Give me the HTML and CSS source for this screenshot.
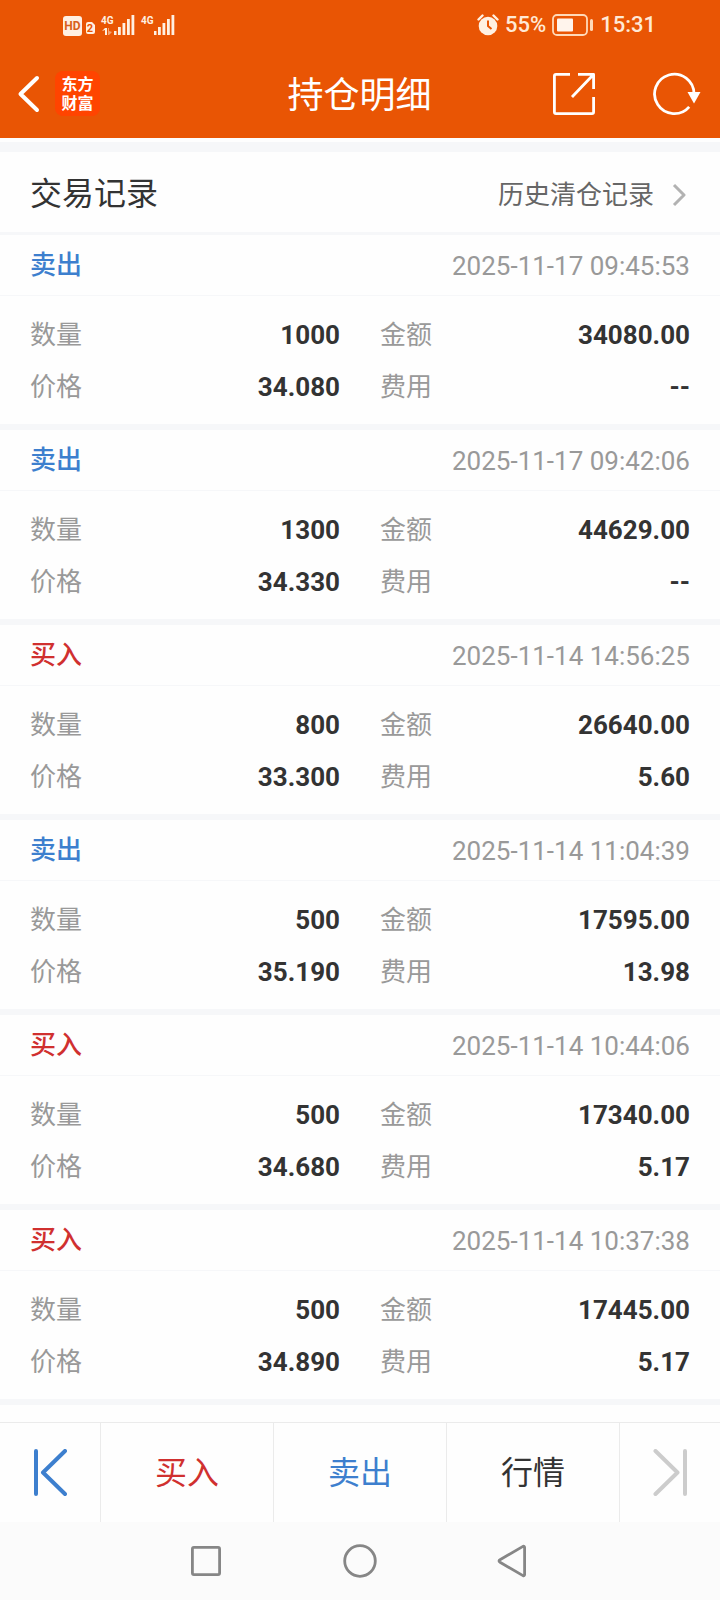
FILE: index.html
```html
<!DOCTYPE html>
<html lang="zh-CN">
<head>
<meta charset="utf-8">
<meta name="viewport" content="width=device-width, initial-scale=1">
<title>持仓明细</title>
<link rel="stylesheet" href="styles.css">
</head>
<body>
<div class="app">
  <header class="top">
    <div class="status">
      <svg class="status-icons" width="116" height="24" viewBox="0 0 116 24" fill="#fff0e2" aria-hidden="true">
        <rect x="0" y="3" width="19" height="20" rx="3"/>
        <text class="hd" x="9.500" y="17" text-anchor="middle">HD</text>
        <path d="M25 9h4l3 3v7q0 2-2 2h-5q-2 0-2-2v-8q0-2 2-2z"/>
        <text class="sim" x="27" y="19" text-anchor="middle">2</text>
        <text class="net" x="38" y="11">4G</text>
        <path d="M39 18l3-3h2v7h-2v-5z"/>
        <path d="M45 15h1v3l3 1-3 3h-1z" opacity=".5"/>
        <path d="M51 18h2.500v4h-2.500zM55 14h2.800v8h-2.800zM59.500 10h2.800v12h-2.800zM64 6h2.800v16h-2.800zM68.500 2h2.800v20h-2.800z"/>
        <text class="net" x="78" y="11">4G</text>
        <path d="M91 18h2.500v4h-2.500zM95 14h2.800v8h-2.800zM99.500 10h2.800v12h-2.800zM104 6h2.800v16h-2.800zM108.500 2h2.800v20h-2.800z"/>
      </svg>
      <div class="status-right">
        <svg width="22" height="22" viewBox="0 0 22 22" aria-hidden="true">
          <circle cx="11" cy="12" r="9.3" fill="#fff0e2"/>
          <path d="M1.500 5.500L5.500 1.500M20.500 5.500L16.500 1.500" stroke="#fff0e2" stroke-width="2.400" stroke-linecap="round"/>
          <path d="M11 6.500V12l3.500 3" fill="none" stroke="#e95504" stroke-width="2"/>
        </svg>
        <span class="battery-text">55%</span>
        <svg width="42" height="22" viewBox="0 0 42 22" aria-hidden="true">
          <rect x="1" y="1" width="34" height="20" rx="4" fill="none" stroke="#ffd9b8" stroke-width="1.800"/>
          <rect x="5" y="4.500" width="16" height="13" rx="1" fill="#fff4ec"/>
          <rect x="38" y="5" width="3" height="12" rx="1.500" fill="#ffd9b8"/>
        </svg>
        <span class="clock">15:31</span>
      </div>
    </div>
    <div class="title-bar">
      <div class="title-left">
        <button class="icon-btn" aria-label="返回">
          <svg width="24" height="40" viewBox="0 0 24 40"><path d="M20 4L3.500 20L20 36" fill="none" stroke="#fff" stroke-width="4" stroke-linecap="round" stroke-linejoin="round"/></svg>
        </button>
        <div class="logo"><span>东方</span><span>财富</span></div>
      </div>
      <h1 class="title">持仓明细</h1>
      <div class="title-right">
        <button class="icon-btn" aria-label="分享">
          <svg width="44" height="44" viewBox="0 0 44 44" fill="none" stroke="#fff" stroke-width="2.800" stroke-linejoin="round"><path d="M18 2.400H4Q2.400 2.400 2.400 4V40Q2.400 41.600 4 41.600H40Q41.600 41.600 41.600 40V25M26 2.400H41.600V17M41 3L20 25"/></svg>
        </button>
        <button class="icon-btn" aria-label="刷新">
          <svg width="50" height="44" viewBox="0 0 50 44"><path d="M37.200 34.800A19.700 19.700 0 1 1 42 22" fill="none" stroke="#fff" stroke-width="2.800"/><path d="M35.500 20H48.500L42 31.500Z" fill="#fff"/></svg>
        </button>
      </div>
    </div>
  </header>

  <main class="content">
    <div class="section-head">
      <h2 class="section-title">交易记录</h2>
      <a class="history" href="#">历史清仓记录
        <svg width="14" height="24" viewBox="0 0 14 24"><path d="M2 2L12 12L2 22" fill="none" stroke="#b2b2b2" stroke-width="3" stroke-linejoin="round"/></svg>
      </a>
    </div>

    <article class="record">
      <div class="record-head"><span class="side sell">卖出</span><time>2025-11-17 09:45:53</time></div>
      <dl class="record-body">
        <div class="cell"><dt>数量</dt><dd>1000</dd></div>
        <div class="cell"><dt>金额</dt><dd>34080.00</dd></div>
        <div class="cell"><dt>价格</dt><dd>34.080</dd></div>
        <div class="cell"><dt>费用</dt><dd>--</dd></div>
      </dl>
    </article>
    <article class="record">
      <div class="record-head"><span class="side sell">卖出</span><time>2025-11-17 09:42:06</time></div>
      <dl class="record-body">
        <div class="cell"><dt>数量</dt><dd>1300</dd></div>
        <div class="cell"><dt>金额</dt><dd>44629.00</dd></div>
        <div class="cell"><dt>价格</dt><dd>34.330</dd></div>
        <div class="cell"><dt>费用</dt><dd>--</dd></div>
      </dl>
    </article>
    <article class="record">
      <div class="record-head"><span class="side buy">买入</span><time>2025-11-14 14:56:25</time></div>
      <dl class="record-body">
        <div class="cell"><dt>数量</dt><dd>800</dd></div>
        <div class="cell"><dt>金额</dt><dd>26640.00</dd></div>
        <div class="cell"><dt>价格</dt><dd>33.300</dd></div>
        <div class="cell"><dt>费用</dt><dd>5.60</dd></div>
      </dl>
    </article>
    <article class="record">
      <div class="record-head"><span class="side sell">卖出</span><time>2025-11-14 11:04:39</time></div>
      <dl class="record-body">
        <div class="cell"><dt>数量</dt><dd>500</dd></div>
        <div class="cell"><dt>金额</dt><dd>17595.00</dd></div>
        <div class="cell"><dt>价格</dt><dd>35.190</dd></div>
        <div class="cell"><dt>费用</dt><dd>13.98</dd></div>
      </dl>
    </article>
    <article class="record">
      <div class="record-head"><span class="side buy">买入</span><time>2025-11-14 10:44:06</time></div>
      <dl class="record-body">
        <div class="cell"><dt>数量</dt><dd>500</dd></div>
        <div class="cell"><dt>金额</dt><dd>17340.00</dd></div>
        <div class="cell"><dt>价格</dt><dd>34.680</dd></div>
        <div class="cell"><dt>费用</dt><dd>5.17</dd></div>
      </dl>
    </article>
    <article class="record">
      <div class="record-head"><span class="side buy">买入</span><time>2025-11-14 10:37:38</time></div>
      <dl class="record-body">
        <div class="cell"><dt>数量</dt><dd>500</dd></div>
        <div class="cell"><dt>金额</dt><dd>17445.00</dd></div>
        <div class="cell"><dt>价格</dt><dd>34.890</dd></div>
        <div class="cell"><dt>费用</dt><dd>5.17</dd></div>
      </dl>
    </article>
  </main>

  <div class="actions">
    <button class="action" aria-label="上一个">
      <svg width="34" height="48" viewBox="0 0 34 48" fill="none" stroke="#3d7fce" stroke-width="4" stroke-linecap="round" stroke-linejoin="round"><path d="M3 2V45M32 2L10 23.500L32 45"/></svg>
    </button>
    <button class="action buy">买入</button>
    <button class="action sell">卖出</button>
    <button class="action">行情</button>
    <button class="action" aria-label="下一个" disabled>
      <svg width="34" height="48" viewBox="0 0 34 48" fill="none" stroke="#cccccc" stroke-width="4" stroke-linecap="round" stroke-linejoin="round"><path d="M32 2V45M2.500 2L24.500 23.500L2.500 45"/></svg>
    </button>
  </div>

  <nav class="system-nav">
    <button class="icon-btn" aria-label="最近任务">
      <svg width="34" height="34" viewBox="0 0 34 34" fill="none" stroke="#868686" stroke-width="2.800"><rect x="3.400" y="3.400" width="27.200" height="27.200" rx="1.500"/></svg>
    </button>
    <button class="icon-btn" aria-label="主屏幕">
      <svg width="34" height="34" viewBox="0 0 34 34" fill="none" stroke="#868686" stroke-width="2.800"><circle cx="17" cy="17" r="15.300"/></svg>
    </button>
    <button class="icon-btn" aria-label="后退">
      <svg width="34" height="34" viewBox="0 0 34 34" fill="none" stroke="#868686" stroke-width="2.800" stroke-linejoin="round"><path d="M3 15.800L26 2.400Q27.600 1.800 27.600 3.400V30.600Q27.600 32.200 26 31.600L3 18.200Q1 17 3 15.800Z"/></svg>
    </button>
  </nav>
</div>
</body>
</html>
```
FILE: styles.css
```css
* {
  box-sizing: border-box;
}

body {
  margin: 0;
  background: #fefefe;
  color: #333;
  font-family: Roboto, "Noto Sans CJK SC", sans-serif;
  font-size: 26px;
}

h1, h2, dl, dd {
  margin: 0;
  font-weight: 400;
}

button {
  margin: 0;
  padding: 0;
  border: 0;
  background: none;
  color: inherit;
  font: inherit;
}

svg {
  display: block;
}

.app {
  display: flex;
  flex-direction: column;
  min-height: 100vh;
}

.top {
  background: #e95504;
  color: #fff;
}

.status {
  display: flex;
  align-items: center;
  justify-content: space-between;
  height: 49px;
  padding: 0 64px 0 63px;
}

.hd, .sim, .net {
  font-family: Roboto, sans-serif;
  font-weight: 700;
}

.hd {
  font-size: 12px;
  fill: #d8601c;
}

.sim {
  font-size: 11px;
  fill: #e95504;
}

.net {
  font-size: 10px;
}

.status-right {
  display: flex;
  align-items: center;
  gap: 6px;
  color: #ffe9d6;
  font-size: 22px;
  font-weight: 500;
  line-height: 28px;
}

.title-bar {
  display: grid;
  grid-template-columns: 1fr auto 1fr;
  align-items: center;
  height: 89px;
  padding: 0 18px 0 17px;
}

.title-left, .title-right {
  display: flex;
  align-items: center;
}

.title-left {
  gap: 14px;
}

.title-right {
  justify-content: flex-end;
  gap: 56px;
}

.logo {
  display: flex;
  flex-direction: column;
  align-items: center;
  justify-content: center;
  width: 45px;
  height: 45px;
  border-radius: 8px;
  background: #ff4400;
  font-size: 16px;
  font-weight: 700;
  line-height: 19px;
}

.title {
  padding-top: 4px;
  font-size: 36px;
  line-height: 48px;
}

.content {
  flex: 1;
  padding-top: 4px;
}

.section-head {
  display: flex;
  align-items: center;
  justify-content: space-between;
  height: 93px;
  padding: 4px 34px 0 30px;
  border-top: 10px solid #f6f7f9;
  border-bottom: 3px solid #f6f7f9;
}

.section-title {
  font-size: 32px;
  line-height: 48px;
}

.history {
  display: flex;
  align-items: center;
  gap: 18px;
  padding-top: 2px;
  color: #666;
  line-height: 36px;
  text-decoration: none;
}

.record {
  border-bottom: 6px solid #f6f7f9;
}

.record-head {
  display: flex;
  align-items: center;
  justify-content: space-between;
  height: 61px;
  padding: 0 30px;
  border-bottom: 1px solid #f6f7f9;
  color: #999;
  line-height: 36px;
}

.record-head time {
  padding-top: 2px;
}

.side {
  font-weight: 500;
}

.sell {
  color: #3d7fce;
}

.buy {
  color: #d0302f;
}

.record-body {
  display: grid;
  grid-template-columns: 1fr 1fr;
  column-gap: 40px;
  padding: 13px 30px 11px;
  line-height: 52px;
}

.cell {
  display: flex;
  justify-content: space-between;
}

.cell dt {
  color: #999;
}

.cell dd {
  font-weight: 700;
}

.actions {
  display: grid;
  grid-template-columns: 100px 1fr 1fr 1fr 101px;
  height: 100px;
  border-top: 1px solid #ebebeb;
  font-size: 32px;
  line-height: 44px;
}

.action {
  display: flex;
  align-items: center;
  justify-content: center;
}

.action + .action {
  border-left: 1px solid #ebebeb;
}

.system-nav {
  display: flex;
  align-items: center;
  justify-content: center;
  gap: 120px;
  height: 78px;
  background: #fbfbfb;
}
```
